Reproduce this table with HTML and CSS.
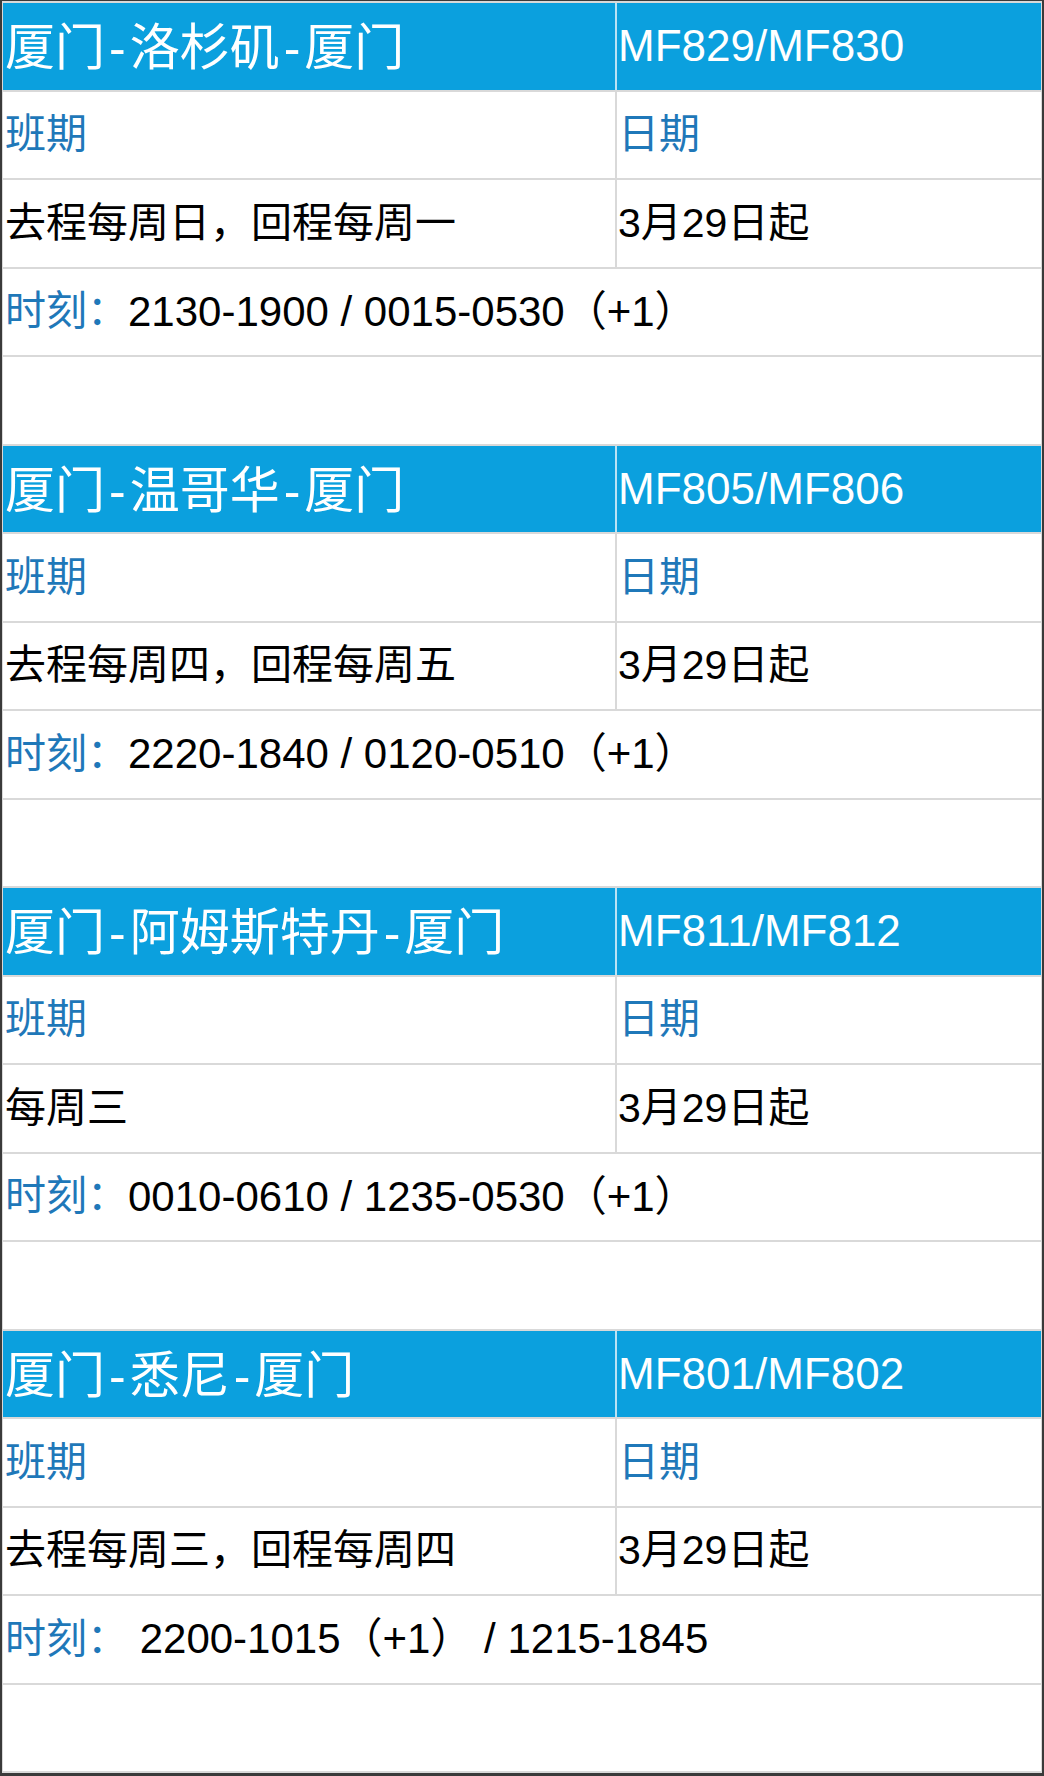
FILE: index.html
```html
<!DOCTYPE html>
<html lang="zh-CN">
<head>
<meta charset="utf-8">
<title>航班时刻</title>
<link rel="stylesheet" href="styles.css">
</head>
<body>
<div class="frame">
  <div class="table">
    <section class="route">
      <div class="row head"><div class="cell c1 title">厦门<span class="dash">-</span>洛杉矶<span class="dash">-</span>厦门</div><div class="cell c2 flight">MF829/MF830</div></div>
      <div class="row"><div class="cell c1 label">班期</div><div class="cell c2 label">日期</div></div>
      <div class="row"><div class="cell c1">去程每周日，回程每周一</div><div class="cell c2">3月29日起</div></div>
      <div class="row wide"><div class="cell time"><span class="label">时刻：</span>2130-1900 / 0015-0530（+1）</div></div>
      <div class="row wide"><div class="cell"></div></div>
    </section>
    <section class="route">
      <div class="row head"><div class="cell c1 title">厦门<span class="dash">-</span>温哥华<span class="dash">-</span>厦门</div><div class="cell c2 flight">MF805/MF806</div></div>
      <div class="row"><div class="cell c1 label">班期</div><div class="cell c2 label">日期</div></div>
      <div class="row"><div class="cell c1">去程每周四，回程每周五</div><div class="cell c2">3月29日起</div></div>
      <div class="row wide"><div class="cell time"><span class="label">时刻：</span>2220-1840 / 0120-0510（+1）</div></div>
      <div class="row wide"><div class="cell"></div></div>
    </section>
    <section class="route">
      <div class="row head"><div class="cell c1 title">厦门<span class="dash">-</span>阿姆斯特丹<span class="dash">-</span>厦门</div><div class="cell c2 flight">MF811/MF812</div></div>
      <div class="row"><div class="cell c1 label">班期</div><div class="cell c2 label">日期</div></div>
      <div class="row"><div class="cell c1">每周三</div><div class="cell c2">3月29日起</div></div>
      <div class="row wide"><div class="cell time"><span class="label">时刻：</span>0010-0610 / 1235-0530（+1）</div></div>
      <div class="row wide"><div class="cell"></div></div>
    </section>
    <section class="route">
      <div class="row head"><div class="cell c1 title">厦门<span class="dash">-</span>悉尼<span class="dash">-</span>厦门</div><div class="cell c2 flight">MF801/MF802</div></div>
      <div class="row"><div class="cell c1 label">班期</div><div class="cell c2 label">日期</div></div>
      <div class="row"><div class="cell c1">去程每周三，回程每周四</div><div class="cell c2">3月29日起</div></div>
      <div class="row wide"><div class="cell time"><span class="label">时刻：</span>&nbsp;2200-1015（+1） / 1215-1845</div></div>
      <div class="row wide"><div class="cell"></div></div>
    </section>
  </div>
</div>
</body>
</html>
```

FILE: styles.css
```css
html, body {
  margin: 0;
  padding: 0;
  background: #ffffff;
}

body {
  width: 1044px;
  height: 1776px;
  font-family: "Liberation Sans", "Noto Sans CJK SC", sans-serif;
  color: #000000;
}

.frame {
  box-sizing: border-box;
  height: 1776px;
  border-style: solid;
  border-color: #3a3a3a;
  border-width: 1px 2px 3px 2px;
  display: flex;
  flex-direction: column;
}

.table {
  flex: 1 1 0;
  display: flex;
  flex-direction: column;
  border-style: solid;
  border-color: #d9d9d9;
  border-width: 2px 1px 0 1px;
}

.route {
  flex: 1 1 0;
  display: flex;
  flex-direction: column;
}

.row {
  flex: 1 1 0;
  min-height: 0;
  display: grid;
  grid-template-columns: 614px 1fr;
  border-bottom: 2px solid #d9d9d9;
}

.row.wide {
  grid-template-columns: 1fr;
}

.cell {
  box-sizing: border-box;
  display: flex;
  align-items: center;
  padding-left: 2px;
  font-size: 41px;
  line-height: 1;
  white-space: pre;
}

.time {
  font-size: 42px;
}

.time .label {
  font-size: 41px;
}

.c1 {
  border-right: 2px solid #d9d9d9;
}

.c2 {
  padding-left: 1px;
}

.head {
  background: #0ba0de;
}

.head .c1 {
  border-right-color: #b9e3f5;
}

.title {
  font-size: 50px;
  color: #ffffff;
  padding-top: 4px;
}

.dash {
  margin: 0 4px;
}

.flight {
  font-size: 44px;
  color: #ffffff;
}

.label {
  color: #1f78b9;
}
```
